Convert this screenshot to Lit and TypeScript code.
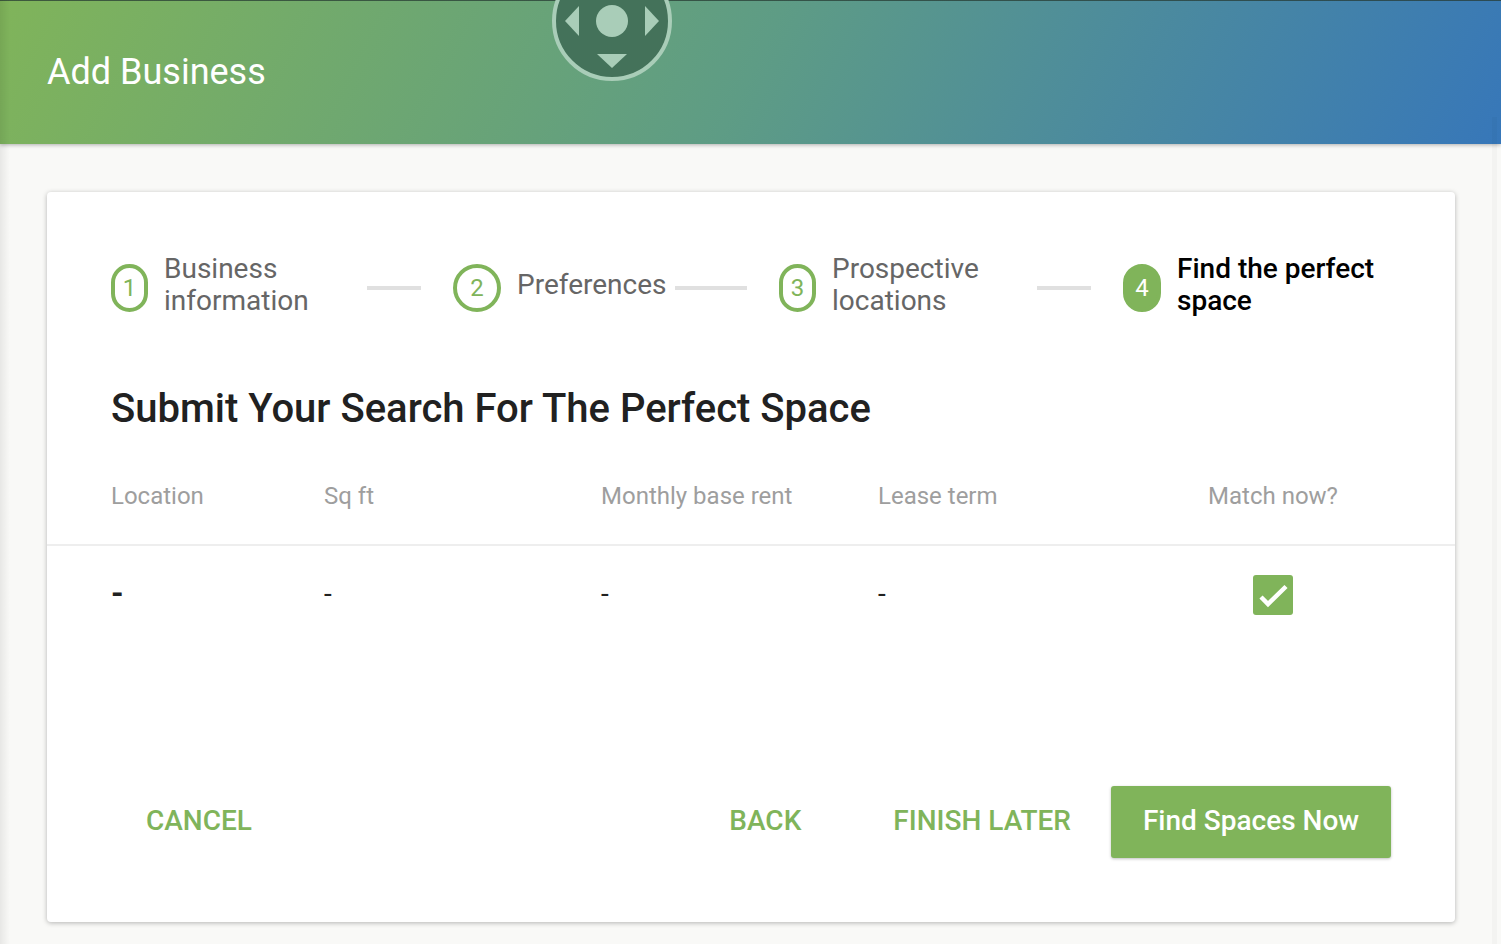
import { css, html, LitElement } from 'lit';
import { customElement } from 'lit/decorators.js';

const steps = [
  { n: 1, label: 'Business information', cls: 'narrow' },
  { n: 2, label: 'Preferences', cls: 'round' },
  { n: 3, label: 'Prospective locations', cls: 'narrow' },
  { n: 4, label: 'Find the perfect space', cls: 'active' },
];

const columns = ['Location', 'Sq ft', 'Monthly base rent', 'Lease term'];

@customElement('app-root')
export class AppRoot extends LitElement {
  static styles = css`
    :host {
      display: block;
      position: relative;
      height: 944px;
      overflow: hidden;
      background: #f9f9f7;
      font-family: Roboto, sans-serif;
    }

    .header {
      position: relative;
      box-sizing: border-box;
      height: 144px;
      padding: 0 48px 2px 47px;
      display: flex;
      align-items: center;
      border-top: 1px solid rgba(40, 60, 50, 0.75);
      background: linear-gradient(116deg, #80b45a 0%, #5e9c85 50%, #3777b9 100%);
      box-shadow: 0 1px 4px rgba(0, 0, 0, 0.3);
      color: #fff;
      font-size: 36px;
    }

    .logo {
      position: absolute;
      left: 552px;
      top: -1px;
    }

    .edge-left {
      position: absolute;
      left: 0;
      top: 0;
      bottom: 0;
      width: 10px;
      background: linear-gradient(90deg, rgba(0, 0, 0, 0.07), rgba(0, 0, 0, 0));
    }

    .edge-right {
      position: absolute;
      right: 4px;
      top: 117px;
      bottom: 0;
      width: 5px;
      background: rgba(0, 0, 0, 0.025);
    }

    .page {
      padding: 48px 46px 0 47px;
    }

    .card {
      box-sizing: border-box;
      height: 730px;
      background: #fff;
      border-radius: 4px;
      box-shadow: 0 1px 5px rgba(0, 0, 0, 0.28);
      padding-top: 64px;
      display: flex;
      flex-direction: column;
    }

    .stepper {
      display: grid;
      grid-template-columns: 256px 86px 222px 104px 258px 86px 1fr;
      align-items: center;
      padding-left: 64px;
      height: 64px;
    }

    .step {
      display: flex;
      align-items: center;
      gap: 16px;
      font-size: 28px;
      line-height: 32px;
      color: #666;
    }

    .step .label {
      width: 180px;
      margin: -3px 0 3px;
    }

    .step.round .label {
      width: auto;
    }

    .step.active .label {
      width: 220px;
      color: #000;
      font-weight: 500;
    }

    .num {
      box-sizing: border-box;
      flex: none;
      width: 37px;
      height: 48px;
      border: 4px solid #80b45a;
      border-radius: 19px;
      display: flex;
      align-items: center;
      justify-content: center;
      font-size: 24px;
      color: #80b45a;
    }

    .round .num {
      width: 48px;
      border-radius: 50%;
    }

    .active .num {
      width: 38px;
      background: #80b45a;
      color: #fff;
    }

    .line {
      height: 4px;
      background: #e0e0e0;
    }

    .line-wrap {
      padding-right: 32px;
    }

    h1 {
      margin: 65px 0 0 64px;
      font-size: 40px;
      line-height: 48px;
      font-weight: 500;
      color: #212121;
    }

    .table {
      margin-top: 28px;
    }

    .row {
      display: grid;
      grid-template-columns: 213px 277px 277px 315px 160px;
      padding-left: 64px;
      align-items: center;
    }

    .row.head {
      height: 85px;
      padding-bottom: 13px;
      border-bottom: 2px solid #eeeeee;
      box-sizing: border-box;
      font-size: 24px;
      color: #9e9e9e;
    }

    .row.body {
      height: 98px;
      font-size: 28px;
      color: #212121;
    }

    .row.body .dash {
      margin-bottom: 4px;
    }

    .row.body .first {
      font-weight: 700;
      font-size: 32px;
    }

    .match {
      justify-self: center;
      white-space: nowrap;
    }

    .check {
      display: block;
    }

    .actions {
      margin-top: auto;
      padding: 0 64px 64px 64px;
      display: flex;
      align-items: center;
      font-size: 28px;
      font-weight: 500;
    }

    .link {
      color: #80b45a;
      font: inherit;
      background: none;
      border: 0;
      padding: 0 0 4px;
    }

    .cancel {
      margin-left: 35px;
      margin-right: auto;
    }

    .finish {
      margin-left: 92px;
    }

    .primary {
      margin-left: 40px;
      width: 280px;
      height: 72px;
      border: 0;
      border-radius: 3px;
      padding: 0 0 4px;
      background: #80b45a;
      color: #fff;
      font: inherit;
      box-shadow: 0 1px 3px rgba(0, 0, 0, 0.25);
    }
  `;

  render() {
    return html`
      <div class="header">
        Add Business
        <svg class="logo" width="120" height="82" viewBox="0 0 120 82">
          <circle cx="60" cy="21" r="58" fill="#44725a" stroke="#a9cdb8" stroke-width="4"></circle>
          <circle cx="60" cy="21" r="16" fill="#a9cdb8"></circle>
          <polygon points="13,21 27,6 27,36" fill="#a9cdb8"></polygon>
          <polygon points="107,21 93,6 93,36" fill="#a9cdb8"></polygon>
          <polygon points="45,54 75,54 60,68" fill="#a9cdb8"></polygon>
        </svg>
      </div>
      <div class="edge-left"></div>
      <div class="edge-right"></div>
      <div class="page">
        <div class="card">
          <div class="stepper">
            ${steps.map(
              (s, i) => html`
                <div class="step ${s.cls}">
                  <div class="num">${s.n}</div>
                  <div class="label">${s.label}</div>
                </div>
                ${i < steps.length - 1 ? html`<div class="line-wrap"><div class="line"></div></div>` : ''}
              `,
            )}
          </div>
          <h1>Submit Your Search For The Perfect Space</h1>
          <div class="table">
            <div class="row head">
              ${columns.map((c) => html`<div>${c}</div>`)}
              <div class="match">Match now?</div>
            </div>
            <div class="row body">
              <div class="dash first">-</div>
              <div class="dash">-</div>
              <div class="dash">-</div>
              <div class="dash">-</div>
              <div class="match">
                <svg class="check" width="40" height="40" viewBox="0 0 40 40">
                  <rect width="40" height="40" rx="3" fill="#80b45a"></rect>
                  <polyline points="8,22 15,29 33,11.5" fill="none" stroke="#fff" stroke-width="4.5"></polyline>
                </svg>
              </div>
            </div>
          </div>
          <div class="actions">
            <button class="link cancel">CANCEL</button>
            <button class="link">BACK</button>
            <button class="link finish">FINISH LATER</button>
            <button class="primary">Find Spaces Now</button>
          </div>
        </div>
      </div>
    `;
  }
}
